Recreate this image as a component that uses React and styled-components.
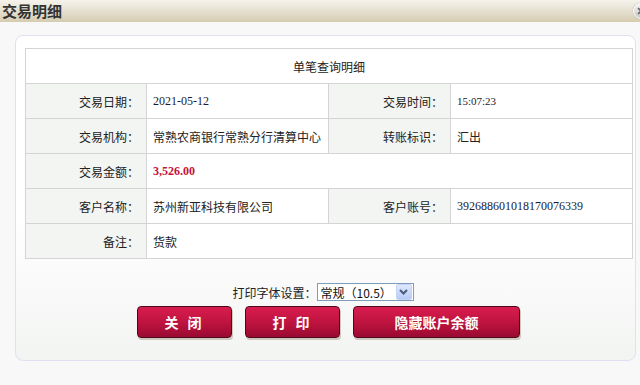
import React from "react"
import styled, { createGlobalStyle } from "styled-components"

const GlobalStyle = createGlobalStyle`
html, body {
  margin: 0;
  padding: 0;
  background: #f8f8f8;
  font-family: "Noto Sans CJK SC", "Liberation Sans", sans-serif;
  overflow: hidden;
}
`

const rows = [
  [
    { label: "交易日期：", value: "2021-05-12", num: true },
    { label: "交易时间：", value: "15:07:23", num: true, small: true },
  ],
  [
    { label: "交易机构：", value: "常熟农商银行常熟分行清算中心" },
    { label: "转账标识：", value: "汇出" },
  ],
  [{ label: "交易金额：", value: "3,526.00", num: true, money: true }],
  [
    { label: "客户名称：", value: "苏州新亚科技有限公司" },
    { label: "客户账号：", value: "392688601018170076339", num: true },
  ],
  [{ label: "备注：", value: "货款" }],
]

const App = () => {
  return (
    <Page>
      <GlobalStyle />
      <TitleBar>
        <Title>交易明细</Title>
        <CloseBtn>
          <svg width="8" height="8" viewBox="0 0 8 8">
            <path d="M1 1 L7 7 M7 1 L1 7" stroke="#666" strokeWidth="1.6" />
          </svg>
        </CloseBtn>
      </TitleBar>
      <Body>
        <Panel>
          <Detail>
            <colgroup>
              <col width="121" />
              <col width="182" />
              <col width="122" />
              <col width="182" />
            </colgroup>
            <tbody>
              <tr>
                <Head colSpan={4}>单笔查询明细</Head>
              </tr>
              {rows.map((row, i) => (
                <tr key={i}>
                  {row.map((cell, j) => (
                    <React.Fragment key={j}>
                      <Label>{cell.label}</Label>
                      <Value
                        colSpan={row.length === 1 ? 3 : 1}
                        $num={cell.num}
                        $money={cell.money}
                        $small={cell.small}
                      >
                        {cell.value}
                      </Value>
                    </React.Fragment>
                  ))}
                </tr>
              ))}
            </tbody>
          </Detail>

          <FontRow>
            <span>打印字体设置：</span>
            <SelectBox>
              <span>常规（10.5）</span>
              <Arrow>
                <svg width="9" height="6" viewBox="0 0 9 6">
                  <path d="M1 1 L4.5 4.5 L8 1" fill="none" stroke="#4a5a7a" strokeWidth="2" />
                </svg>
              </Arrow>
            </SelectBox>
          </FontRow>

          <Buttons>
            <RedButton $w={95} $spaced>关 闭</RedButton>
            <RedButton $w={95} $spaced>打 印</RedButton>
            <RedButton $w={167}>隐藏账户余额</RedButton>
          </Buttons>
        </Panel>
      </Body>
    </Page>
  )
}

const Page = styled.div`
width: 640px;
height: 385px;
overflow: hidden;
`

const TitleBar = styled.div`
height: 22px;
display: flex;
align-items: center;
justify-content: space-between;
background: linear-gradient(#f5f3ec, #e2dccb 60%, #d5ccaf);
`

const Title = styled.div`
font-size: 15px;
font-weight: bold;
color: #333;
padding-left: 2px;
line-height: 22px;
`

const CloseBtn = styled.div`
width: 16px;
height: 16px;
margin-right: -9px;
border-radius: 50%;
border: 1px solid #fff;
background: linear-gradient(#f2f2f2, #c8c8c8);
box-shadow: 0 0 1px #888;
display: flex;
align-items: center;
padding-left: 3px;
box-sizing: border-box;
`

const Body = styled.div`
padding: 13px 4px 0 15px;
`

const Panel = styled.div`
height: 312px;
border: 1px solid #e0e0f2;
border-radius: 8px;
background: linear-gradient(#ffffff 55%, #f2f4f2);
padding: 12px 3px 0 9px;
`

const Detail = styled.table`
width: 607px;
border-collapse: collapse;
table-layout: fixed;
td {
  border: 1px solid #d4d4d4;
  height: 34px;
  padding: 0;
  font-size: 12px;
  color: #222;
}
`

const Head = styled.td`
text-align: center;
background: #fff;
`

const Label = styled.td`
text-align: right;
padding-right: 7px !important;
background: #f3f5f3;
`

const Value = styled.td`
background: #fff;
padding-left: 6px !important;
font-family: ${(p) => (p.$num ? '"Liberation Serif", serif' : 'inherit')};
font-size: ${(p) => (p.$small ? "11px" : "12px")} !important;
color: ${(p) => (p.$money ? "#c8103c" : p.$num ? "#1a1a30" : "#222")} !important;
font-weight: ${(p) => (p.$money ? "bold" : "normal")};
`

const FontRow = styled.div`
margin-top: 24px;
display: flex;
align-items: center;
justify-content: center;
padding-right: 11px;
font-size: 12px;
color: #222;
`

const SelectBox = styled.div`
width: 97px;
height: 18px;
border: 1px solid #7f9db9;
background: #fff;
display: flex;
align-items: center;
justify-content: space-between;
box-sizing: border-box;
padding-left: 3px;
font-size: 12px;
color: #111;
`

const Arrow = styled.div`
width: 16px;
height: 16px;
margin-right: 1px;
display: flex;
align-items: center;
justify-content: center;
border-radius: 2px;
background: linear-gradient(#dfe8fd, #b7cbf6);
border: 1px solid #c4d3f5;
box-sizing: border-box;
`

const Buttons = styled.div`
margin-top: 5px;
display: flex;
justify-content: center;
gap: 13px;
`

const RedButton = styled.button`
width: ${(p) => p.$w}px;
height: 32px;
border: 1px solid #4a0a1c;
border-radius: 4px;
background: linear-gradient(#d81c50, #c0143f 50%, #990a32);
box-shadow: 1px 2px 0 #cfc6bd;
color: #fff;
font-family: "Noto Sans CJK SC", sans-serif;
font-size: 14px;
font-weight: bold;
letter-spacing: ${(p) => (p.$spaced ? "3px" : "0")};
padding: 0;
`

export default App
